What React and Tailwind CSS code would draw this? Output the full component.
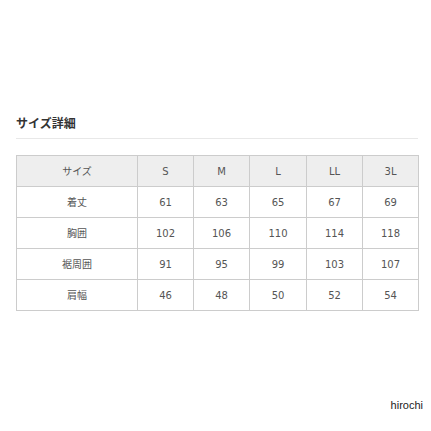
const sizes = ["S", "M", "L", "LL", "3L"];

const rows = [
  { label: "着丈", values: [61, 63, 65, 67, 69] },
  { label: "胸囲", values: [102, 106, 110, 114, 118] },
  { label: "裾周囲", values: [91, 95, 99, 103, 107] },
  { label: "肩幅", values: [46, 48, 50, 52, 54] },
];

const cell =
  "border border-[#cccccc] h-[31px] p-0 text-center align-middle font-normal";

export default function App() {
  return (
    <div
      className="w-[431px] h-[431px] bg-white pl-[16px] pr-[13px] pt-[114px] overflow-hidden"
      style={{ fontFamily: '"DejaVu Sans", "Noto Sans CJK JP", sans-serif' }}
    >
      <h2
        className="text-[12px] leading-[18px] font-bold text-[#333333] pb-[6px] border-b border-[#e8e8e8]"
        style={{ fontFamily: '"Noto Sans CJK JP", sans-serif' }}
      >
        サイズ詳細
      </h2>

      <table className="mt-[16px] w-[402px] table-fixed border-collapse text-[10px] text-[#555555]">
        <colgroup>
          <col className="w-[121px]" />
          <col className="w-[56px]" />
          <col className="w-[56px]" />
          <col className="w-[57px]" />
          <col className="w-[56px]" />
          <col className="w-[56px]" />
        </colgroup>
        <thead>
          <tr className="bg-[#eeeeee]">
            <th className={cell}>サイズ</th>
            {sizes.map((s) => (
              <th key={s} className={cell}>
                {s}
              </th>
            ))}
          </tr>
        </thead>
        <tbody>
          {rows.map((r) => (
            <tr key={r.label}>
              <td className={cell}>{r.label}</td>
              {r.values.map((v, i) => (
                <td key={i} className={cell}>
                  {v}
                </td>
              ))}
            </tr>
          ))}
        </tbody>
      </table>

      <div className="flex justify-end -mr-[5px] mt-[88px]">
        <span
          className="text-[11px] leading-[13px] text-[#222222]"
          style={{ fontFamily: '"Liberation Sans", Arial, sans-serif' }}
        >
          hirochi
        </span>
      </div>
    </div>
  );
}
